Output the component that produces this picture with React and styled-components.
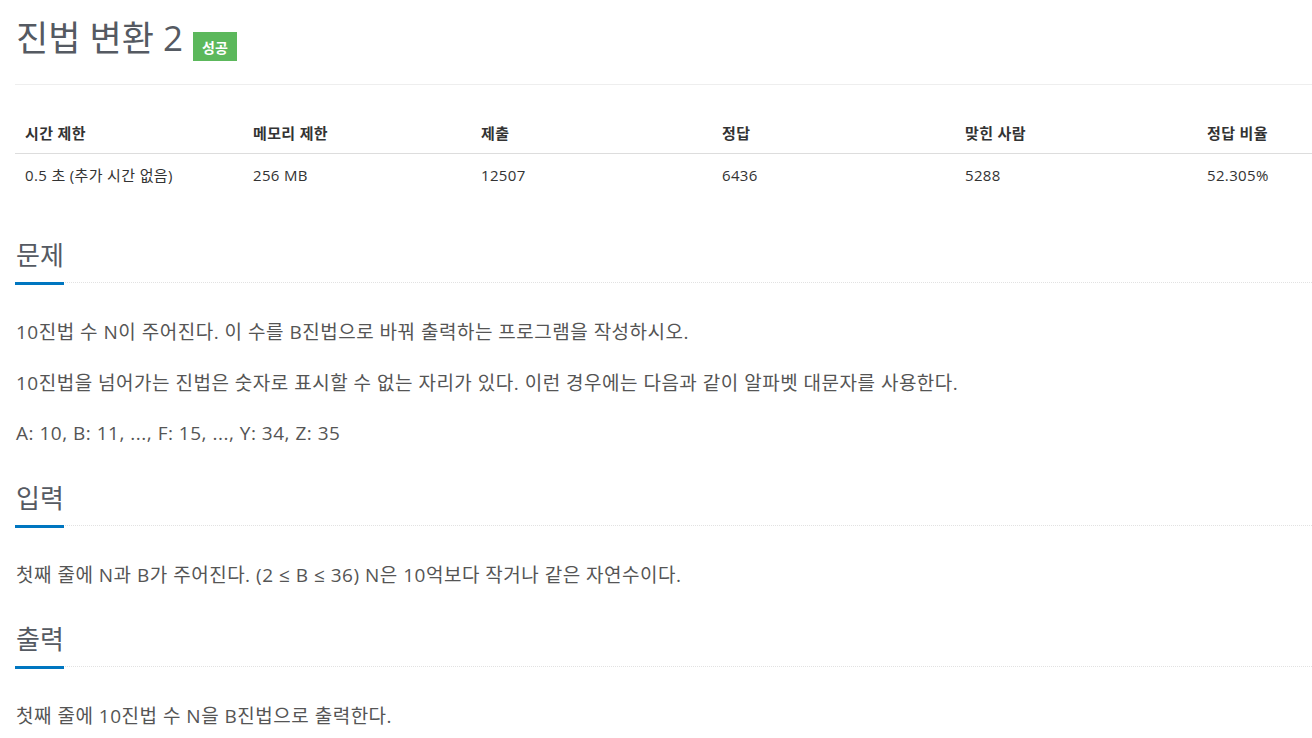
import styled, { createGlobalStyle } from 'styled-components';

const GlobalStyle = createGlobalStyle`
  body {
    margin: 0;
    background: #fff;
    font-family: 'Open Sans', 'Noto Sans CJK KR', sans-serif;
    color: #333;
  }
`;

const stats = [
  { label: '시간 제한', value: '0.5 초 (추가 시간 없음)', width: 228 },
  { label: '메모리 제한', value: '256 MB', width: 228 },
  { label: '제출', value: '12507', width: 241 },
  { label: '정답', value: '6436', width: 243 },
  { label: '맞힌 사람', value: '5288', width: 242 },
  { label: '정답 비율', value: '52.305%' },
];

const sections = [
  {
    title: '문제',
    lines: [
      '10진법 수 N이 주어진다. 이 수를 B진법으로 바꿔 출력하는 프로그램을 작성하시오.',
      '10진법을 넘어가는 진법은 숫자로 표시할 수 없는 자리가 있다. 이런 경우에는 다음과 같이 알파벳 대문자를 사용한다.',
      'A: 10, B: 11, ..., F: 15, ..., Y: 34, Z: 35',
    ],
  },
  {
    title: '입력',
    lines: ['첫째 줄에 N과 B가 주어진다. (2 ≤ B ≤ 36) N은 10억보다 작거나 같은 자연수이다.'],
  },
  {
    title: '출력',
    lines: ['첫째 줄에 10진법 수 N을 B진법으로 출력한다.'],
  },
];

export default function App() {
  return (
    <Page>
      <GlobalStyle />
      <Header>
        <Title>진법 변환 2</Title>
        <Badge>성공</Badge>
      </Header>
      <StatTable>
        <thead>
          <tr>
            {stats.map((s) => (
              <Th key={s.label} $width={s.width}>
                {s.label}
              </Th>
            ))}
          </tr>
        </thead>
        <tbody>
          <tr>
            {stats.map((s) => (
              <Td key={s.label}>{s.value}</Td>
            ))}
          </tr>
        </tbody>
      </StatTable>
      {sections.map((sec) => (
        <Section key={sec.title}>
          <Headline>
            <HeadTitle>{sec.title}</HeadTitle>
          </Headline>
          {sec.lines.map((line) => (
            <Text key={line}>{line}</Text>
          ))}
        </Section>
      ))}
    </Page>
  );
}

const Page = styled.div`
  padding-left: 15px;
`;

const Header = styled.div`
  display: flex;
  align-items: flex-end;
  padding: 18px 0 26px 1px;
  border-bottom: 1px solid #eee;
`;

const Title = styled.h1`
  margin: 0;
  font-size: 35px;
  font-weight: 400;
  line-height: 40px;
  color: #555a62;
`;

const Badge = styled.span`
  display: inline-flex;
  align-items: center;
  justify-content: center;
  height: 29px;
  padding: 0 9px;
  margin: 0 0 -3px 10px;
  background: #5cb85c;
  color: #fff;
  font-size: 14px;
  font-weight: 700;
`;

const StatTable = styled.table`
  width: 100%;
  margin-top: 28px;
  border-collapse: collapse;
  font-size: 15px;
  letter-spacing: 0.35px;
`;

const Th = styled.th`
  box-sizing: border-box;
  width: ${(p) => (p.$width ? `${p.$width}px` : 'auto')};
  padding: 10px;
  line-height: 20px;
  text-align: left;
  font-weight: 700;
  color: #333;
  border-bottom: 1px solid #ddd;
`;

const Td = styled.td`
  padding: 11px 10px 9px;
  line-height: 20px;
  color: #333;
`;

const Section = styled.section`
  padding-top: 46px;

  & + & {
    padding-top: 34px;
  }
`;

const Headline = styled.div`
  border-bottom: 1px dotted #e2e2e2;
  margin-bottom: 34px;
`;

const HeadTitle = styled.h2`
  display: inline-block;
  margin: 0 0 -3px;
  padding: 0 0 12px 1px;
  font-size: 26px;
  font-weight: 400;
  line-height: 30px;
  color: #555a62;
  border-bottom: 3px solid #0076c0;
`;

const Text = styled.p`
  margin: 0 0 20px 1px;
  font-size: 19px;
  letter-spacing: 0.5px;
  line-height: 30.6px;
  color: #555;

  &:last-child {
    margin-bottom: 0;
  }
`;
